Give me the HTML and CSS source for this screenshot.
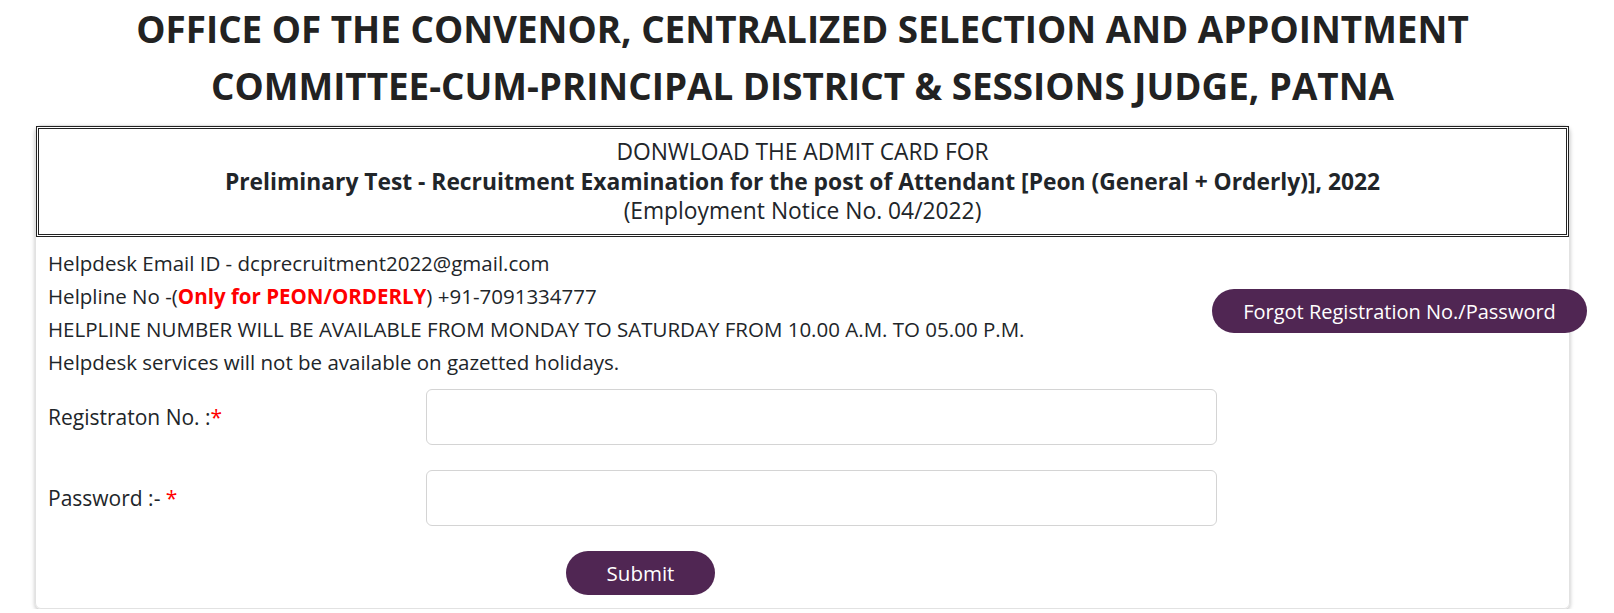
FILE: index.html
```html
<!DOCTYPE html>
<html lang="en">
<head>
<meta charset="utf-8">
<title>Admit Card Download</title>
<link rel="stylesheet" href="styles.css">
</head>
<body>
<div class="page">
  <h1 class="title">OFFICE OF THE CONVENOR, CENTRALIZED SELECTION AND APPOINTMENT<br>COMMITTEE-CUM-PRINCIPAL DISTRICT &amp; SESSIONS JUDGE, PATNA</h1>
  <div class="card">
    <div class="notice">
      <div>DONWLOAD THE ADMIT CARD FOR</div>
      <div class="notice-bold">Preliminary Test - Recruitment Examination for the post of Attendant [Peon (General + Orderly)], 2022</div>
      <div>(Employment Notice No. 04/2022)</div>
    </div>
    <div class="info-row">
      <div class="info">
        <div>Helpdesk Email ID - dcprecruitment2022@gmail.com</div>
        <div>Helpline No -(<span class="red-bold">Only for PEON/ORDERLY</span>) +91-7091334777</div>
        <div>HELPLINE NUMBER WILL BE AVAILABLE FROM MONDAY TO SATURDAY FROM 10.00 A.M. TO 05.00 P.M.</div>
        <div>Helpdesk services will not be available on gazetted holidays.</div>
      </div>
      <button class="btn btn-forgot" type="button">Forgot Registration No./Password</button>
    </div>
    <form class="form">
      <div class="form-row">
        <label class="form-label" for="reg">Registraton No. :<span class="req">*</span></label>
        <input class="form-input" id="reg" type="text">
      </div>
      <div class="form-row">
        <label class="form-label" for="pwd">Password :- <span class="req">*</span></label>
        <input class="form-input" id="pwd" type="password">
      </div>
      <div class="submit-row">
        <button class="btn btn-submit" type="button">Submit</button>
      </div>
    </form>
  </div>
</div>
</body>
</html>
```
FILE: styles.css
```css
* { box-sizing: border-box; }
html, body { margin: 0; padding: 0; background: #fff; }
body {
  font-family: "Open Sans", "Noto Sans", sans-serif;
  color: #212529;
  font-size: 20.5px;
}
.page {
  width: 1535px;
  margin-left: 35px;
}
.title {
  margin: 1px 0 10px;
  text-align: center;
  font-size: 36.8px;
  line-height: 57px;
  font-weight: 700;
  color: #222;
}
.card {
  border: 1px solid #e2e2e2;
  border-radius: 6px;
  box-shadow: 0 2px 4px rgba(0,0,0,0.25);
  padding: 0 12px 12px;
  height: 484px;
}
.notice {
  margin: 0 -12px;
  border: 3px double #222;
  text-align: center;
  font-size: 22.8px;
  line-height: 29.5px;
  padding: 8px 0 8px;
}
.notice-bold { font-weight: 700; }
.info-row {
  display: flex;
  align-items: center;
  justify-content: space-between;
  margin-right: -30px;
  padding-top: 10px;
}
.info {
  line-height: 33px;
}
.red-bold { color: #f00; font-weight: 700; }
.btn {
  font-family: inherit;
  background: #502653;
  color: #fff;
  border: none;
  font-size: 20px;
  cursor: pointer;
}
.btn-forgot {
  flex: none;
  width: 375px;
  height: 44px;
  border-radius: 22px;
  margin-top: -3px;
}
.form { margin-top: 10px; }
.form-row {
  display: flex;
  align-items: center;
  margin-bottom: 25px;
}
.form-label {
  width: 378px;
  flex: none;
  font-size: 21px;
}
.req { color: #f00; }
.form-input {
  width: 791px;
  height: 56px;
  border: 1px solid #d4d4d4;
  border-radius: 6px;
  font-size: 19px;
}
.submit-row {
  padding-left: 518px;
}
.btn-submit {
  width: 149px;
  height: 44px;
  border-radius: 22px;
  font-size: 20.5px;
}
```
